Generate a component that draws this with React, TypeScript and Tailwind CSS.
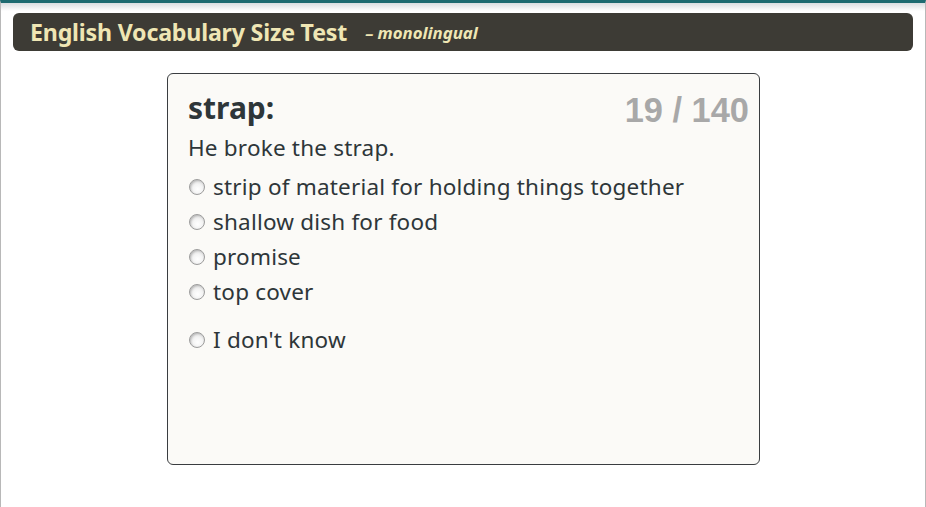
import React from "react";

const options = [
  "strip of material for holding things together",
  "shallow dish for food",
  "promise",
  "top cover",
];

function Radio() {
  return (
    <span className="inline-block w-[16px] h-[16px] rounded-full border border-[#9c9c9c] bg-[radial-gradient(circle_at_55%_65%,#ffffff_0%,#f4f4f4_40%,#cfcfcf_100%)] shadow-[inset_1px_1px_2px_rgba(0,0,0,0.18)] shrink-0 mt-[1px]" />
  );
}

export default function App() {
  return (
    <div className="w-[926px] h-[507px] bg-white border-x border-[#b8b8b8] border-t-[3px] border-t-[#1d6a70] relative overflow-hidden">
      <div className="h-[8px] bg-gradient-to-b from-[#d9dde0] to-white" />
      <div className="px-[12px] pt-[2px]">
        <div className="h-[38px] rounded-[6px] bg-[#3d3b35] flex items-center pl-[17px] gap-[18px]">
          <span className="text-[#efe6b4] font-bold text-[23.2px] tracking-[-0.2px]" style={{ fontFamily: '"Noto Sans", sans-serif' }}>
            English Vocabulary Size Test
          </span>
          <span className="text-[#efe6b4] font-bold italic text-[16.8px] mt-[2px]" style={{ fontFamily: '"Noto Sans", sans-serif' }}>
            – monolingual
          </span>
        </div>
      </div>
      <div className="flex justify-center pt-[22px] pr-[1px]">
        <div className="w-[593px] h-[392px] ml-[2px] rounded-[6px] border border-[#3a3d40] bg-[#fbfaf7] relative px-[20px] pt-[16px]" style={{ fontFamily: '"Noto Sans", sans-serif' }}>
          <div className="absolute right-[10px] top-[19px] text-[#a8a8a8] font-bold text-[34.4px] leading-none" style={{ fontFamily: '"Liberation Sans", Arial, sans-serif' }}>
            19 / 140
          </div>
          <div className="text-[#2e3639] font-bold text-[30px] leading-[36px]">strap:</div>
          <div className="text-[#2e3639] text-[22.5px] tracking-[0.2px] leading-[28px] mt-[8px]">He broke the strap.</div>
          <div className="mt-[7px] flex flex-col">
            {options.map((o) => (
              <label key={o} className="flex items-center gap-[8px] h-[35px] text-[#2e3639] text-[22.5px] tracking-[0.2px] pl-[1px]">
                <Radio />
                <span>{o}</span>
              </label>
            ))}
            <label className="flex items-center gap-[8px] h-[35px] mt-[13px] text-[#2e3639] text-[22.5px] tracking-[0.2px] pl-[1px]">
              <Radio />
              <span>I don't know</span>
            </label>
          </div>
        </div>
      </div>
    </div>
  );
}
